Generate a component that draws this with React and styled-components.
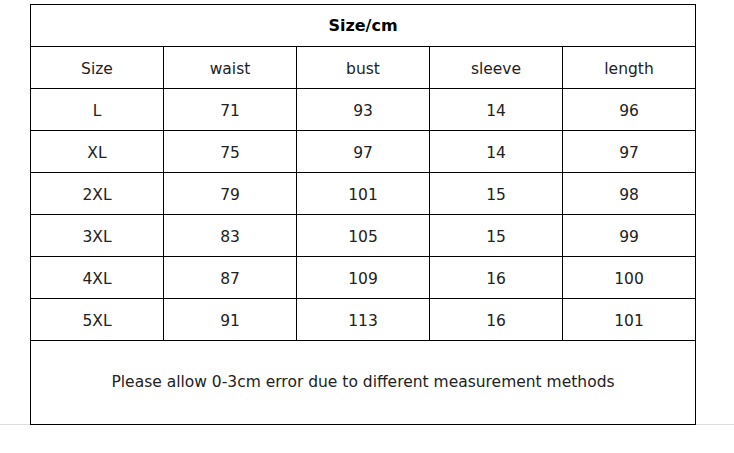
import React from "react";
import styled, { createGlobalStyle } from "styled-components";

const Global = createGlobalStyle`
  html, body { margin: 0; padding: 0; background: #fff; }
  body { font-family: "DejaVu Sans", "Liberation Sans", sans-serif; }
`;

const Page = styled.div`
  width: 734px;
  height: 453px;
  box-sizing: border-box;
  padding-top: 4px;
`;

const Rule = styled.div`
  padding-left: 30px;
  border-bottom: 1px solid #dcdcdc;
`;

const Grid = styled.div`
  display: grid;
  grid-template-columns: repeat(5, 133px);
  width: max-content;
  border-top: 1px solid #000;
  border-left: 1px solid #000;
  margin-bottom: -1px;
  position: relative;
  background: #fff;
`;

const Cell = styled.div`
  box-sizing: border-box;
  height: 42px;
  padding-top: 2px;
  border-right: 1px solid #000;
  border-bottom: 1px solid #000;
  display: flex;
  align-items: center;
  justify-content: center;
  font-size: 15.5px;
  color: #222;
`;

const Title = styled(Cell)`
  grid-column: 1 / -1;
  padding-top: 0;
  font-size: 16px;
  font-weight: 700;
  color: #000;
`;

const Note = styled(Cell)`
  grid-column: 1 / -1;
  height: 84px;
  padding-top: 0;
  padding-bottom: 1px;
`;

const head = ["Size", "waist", "bust", "sleeve", "length"];
const rows = [
  ["L", 71, 93, 14, 96],
  ["XL", 75, 97, 14, 97],
  ["2XL", 79, 101, 15, 98],
  ["3XL", 83, 105, 15, 99],
  ["4XL", 87, 109, 16, 100],
  ["5XL", 91, 113, 16, 101],
];

export default function App() {
  return (
    <>
      <Global />
      <Page>
        <Rule>
          <Grid>
            <Title>Size/cm</Title>
            {head.map((h) => (
              <Cell key={h}>{h}</Cell>
            ))}
            {rows.map((r) =>
              r.map((v, i) => <Cell key={r[0] + i}>{v}</Cell>)
            )}
            <Note>
              Please allow 0-3cm error due to different measurement methods
            </Note>
          </Grid>
        </Rule>
      </Page>
    </>
  );
}
